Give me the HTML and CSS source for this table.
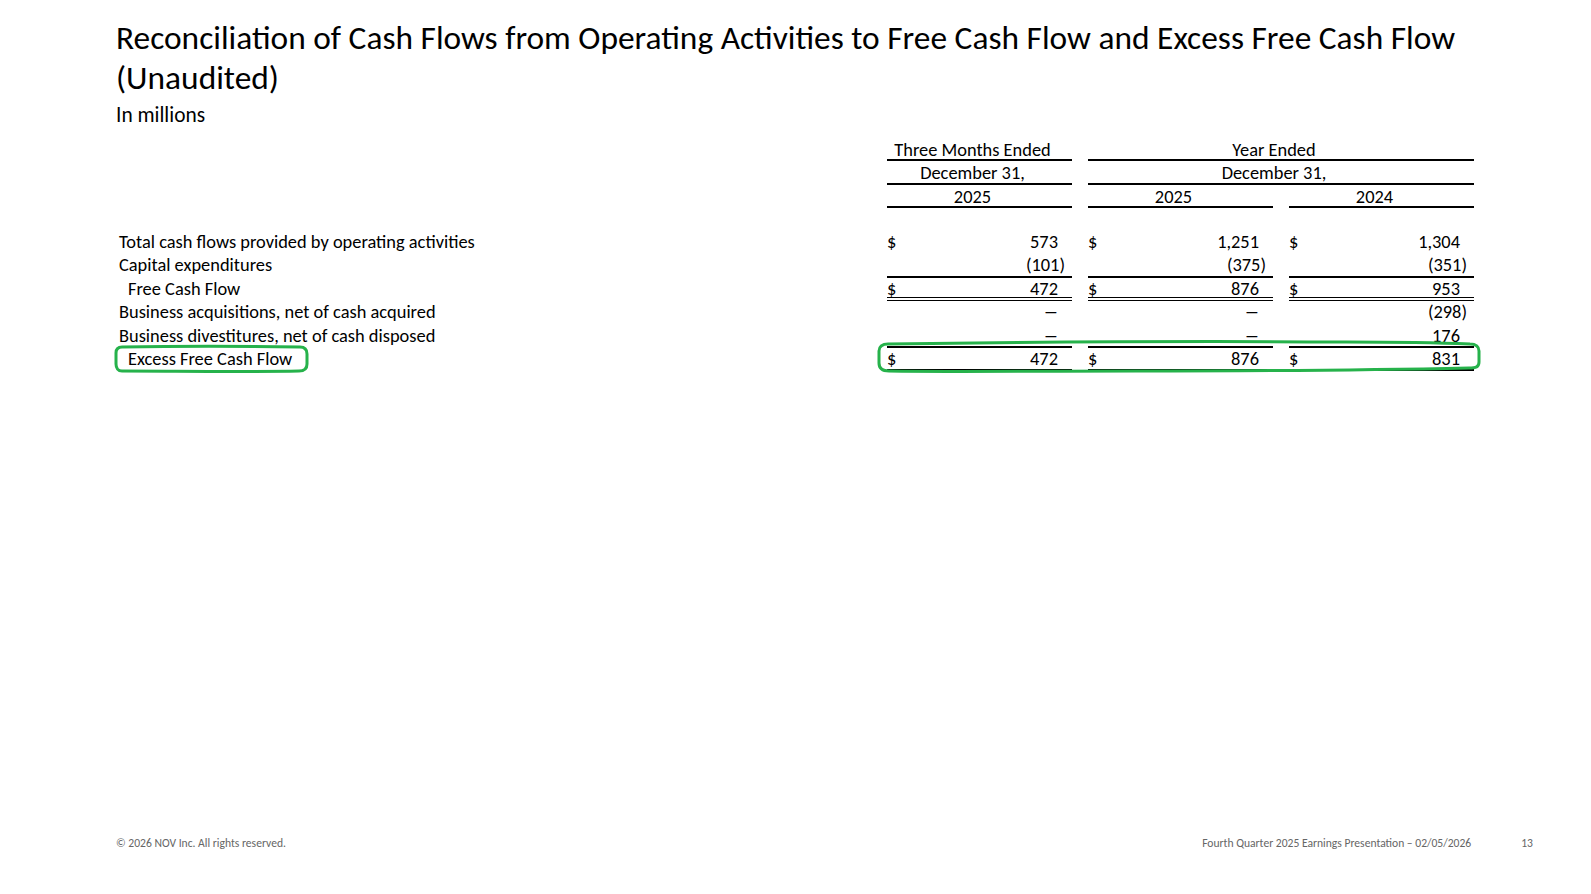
FILE: index.html
```html
<!DOCTYPE html>
<html lang="en">
<head>
<meta charset="utf-8">
<title>Reconciliation of Cash Flows</title>
<link rel="stylesheet" href="styles.css">
</head>
<body>
<div class="page">
  <h1 class="title">Reconciliation of Cash Flows from Operating Activities to Free Cash Flow and Excess Free Cash Flow<br>(Unaudited)</h1>
  <div class="subtitle">In millions</div>

  <div class="table">
    <div class="h-label"></div>
    <div class="h-cell c1">Three Months Ended</div>
    <div class="h-cell c23">Year Ended</div>

    <div class="h-label"></div>
    <div class="h-cell c1">December 31,</div>
    <div class="h-cell c23">December 31,</div>

    <div class="h-label"></div>
    <div class="h-cell c1">2025</div>
    <div class="h-cell c2">2025</div>
    <div class="h-cell c3">2024</div>

    <div class="spacer"></div>

    <div class="label">Total cash flows provided by operating activities</div>
    <div class="num"><span class="cur">$</span><span class="val">573</span></div>
    <div class="num"><span class="cur">$</span><span class="val">1,251</span></div>
    <div class="num"><span class="cur">$</span><span class="val">1,304</span></div>

    <div class="label">Capital expenditures</div>
    <div class="num single"><span class="cur"></span><span class="val">(101<span class="cp">)</span></span></div>
    <div class="num single"><span class="cur"></span><span class="val">(375<span class="cp">)</span></span></div>
    <div class="num single"><span class="cur"></span><span class="val">(351<span class="cp">)</span></span></div>

    <div class="label indent">Free Cash Flow</div>
    <div class="num double"><span class="cur">$</span><span class="val">472</span></div>
    <div class="num double"><span class="cur">$</span><span class="val">876</span></div>
    <div class="num double"><span class="cur">$</span><span class="val">953</span></div>

    <div class="label">Business acquisitions, net of cash acquired</div>
    <div class="num"><span class="cur"></span><span class="val dash">—</span></div>
    <div class="num"><span class="cur"></span><span class="val dash">—</span></div>
    <div class="num"><span class="cur"></span><span class="val">(298<span class="cp">)</span></span></div>

    <div class="label">Business divestitures, net of cash disposed</div>
    <div class="num single"><span class="cur"></span><span class="val dash">—</span></div>
    <div class="num single"><span class="cur"></span><span class="val dash">—</span></div>
    <div class="num single"><span class="cur"></span><span class="val">176</span></div>

    <div class="label indent">Excess Free Cash Flow</div>
    <div class="num single"><span class="cur">$</span><span class="val">472</span></div>
    <div class="num single"><span class="cur">$</span><span class="val">876</span></div>
    <div class="num single"><span class="cur">$</span><span class="val">831</span></div>
  </div>

  <footer class="footer">
    <span class="copy">© 2026 NOV Inc. All rights reserved.</span>
    <span class="footer-right">
      <span>Fourth Quarter 2025 Earnings Presentation – 02/05/2026</span>
      <span class="pageno">13</span>
    </span>
  </footer>

  <svg class="mark mark-label" width="198" height="30" viewBox="0 0 198 30">
    <path d="M9 3 C60 2 130 2 187 3 C192 3 194 6 194 10 L194 20 C194 25 191 27 186 27 C130 28 60 27 9 27 C5 27 3 24 3 20 L3 9 C3 5 5 3 9 3 Z" fill="none" stroke="#26b24b" stroke-width="3"/>
  </svg>
  <svg class="mark mark-values" width="606" height="36" viewBox="0 0 606 36">
    <path d="M12 4 C150 2 320 1 470 2 C530 2 570 3 594 4 C600 4 603 7 603 11 L603 22 C603 27 600 28 593 28 C500 30 400 31 260 31 C150 31 70 32 13 31 C6 31 3 28 3 23 L3 11 C3 7 6 4 12 4 Z" fill="none" stroke="#26b24b" stroke-width="3"/>
  </svg>
</div>
</body>
</html>
```

FILE: styles.css
```css
html, body {
  margin: 0;
  padding: 0;
  background: #ffffff;
}

body {
  font-family: Carlito, Calibri, Lato, "Open Sans", sans-serif;
  color: #000000;
}

.page {
  position: relative;
  box-sizing: border-box;
  min-height: 100vh;
  padding: 18px 0 44px 116px;
  display: flex;
  flex-direction: column;
  align-items: flex-start;
}

.title {
  margin: 0;
  font-weight: 400;
  font-size: 33.4px;
  line-height: 40px;
  white-space: nowrap;
}

.subtitle {
  margin-top: 6px;
  font-size: 21.4px;
  line-height: 22px;
}

.table {
  margin-top: 11.5px;
  display: grid;
  grid-template-columns: 755px 185px 185px 185px;
  column-gap: 16px;
  font-size: 18.4px;
}

.h-label {
  grid-column: 1;
}

.h-cell {
  box-sizing: border-box;
  height: 23.5px;
  padding-top: 1px;
  line-height: 21px;
  text-align: center;
  padding-right: 14px;
  border-bottom: 2px solid #000;
}

.c1 { grid-column: 2; }
.c2 { grid-column: 3; }
.c3 { grid-column: 4; }
.c23 { grid-column: 3 / 5; }

.spacer {
  grid-column: 1 / 5;
  height: 23px;
}

.label {
  grid-column: 1;
  height: 23.4px;
  line-height: 21.5px;
  padding-left: 3px;
  white-space: nowrap;
}

.label.indent {
  padding-left: 12px;
}

.num {
  box-sizing: border-box;
  height: 23.4px;
  line-height: 21.5px;
  display: flex;
  justify-content: space-between;
  padding-right: 14px;
}

.num.single {
  border-bottom: 2px solid #000;
}

.num.double {
  border-bottom: 4px double #000;
}

.cp {
  margin-right: -7px;
}

.dash {
  display: inline-block;
  transform: scaleX(0.8);
  transform-origin: right center;
}

.footer {
  margin-top: auto;
  width: 100%;
  box-sizing: border-box;
  padding-right: 58px;
  display: flex;
  justify-content: space-between;
  font-size: 11.6px;
  line-height: 14px;
  color: #666666;
}

.footer-right {
  display: flex;
  gap: 50px;
}

.mark {
  position: absolute;
  pointer-events: none;
}

.mark-label {
  left: 113px;
  top: 344px;
}

.mark-values {
  left: 876px;
  top: 340px;
}
```
